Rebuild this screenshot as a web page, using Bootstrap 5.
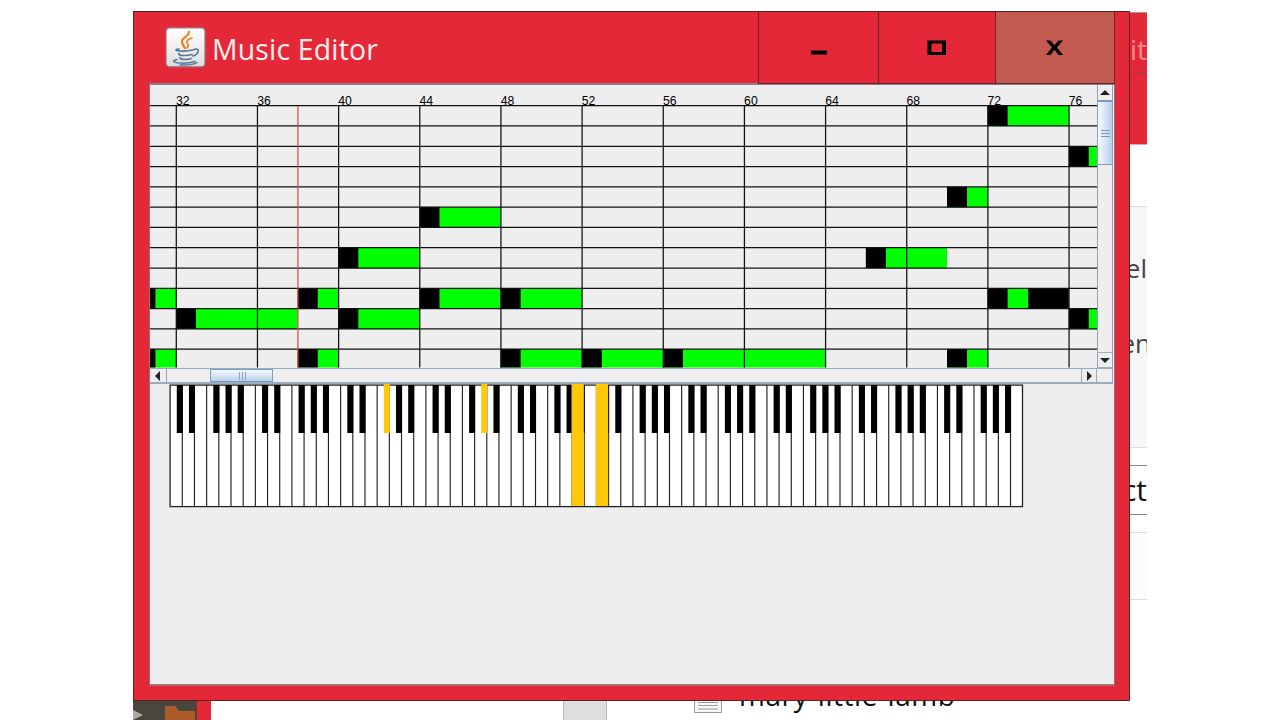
<!DOCTYPE html>
<html lang="en">
<head>
<meta charset="utf-8">
<title>Music Editor</title>
<link href="https://cdn.jsdelivr.net/npm/bootstrap@5.3.0/dist/css/bootstrap.min.css" rel="stylesheet">
<style>
body{background:#fff;font-family:"Open Sans","Noto Sans",sans-serif;height:720px}
svg{display:block;flex:none}
.desktop{width:1014px;height:709px;margin:11px 0 0 133px}
.edge{width:17px;right:0;top:0;height:690px}
.edge>div{display:flex;align-items:center;justify-content:flex-end;white-space:nowrap;overflow:hidden;flex:none;line-height:1}
.e-red{background:#e52837}
.e-title{height:62px;border-top:1px solid #a99;border-bottom:1px solid #94404a;color:#f78b91;font-size:28px;padding-top:12px;margin-top:1px}
.edge>.e-panel{background:#f5f7f9;border-top:1px solid #dcdcdf;border-bottom:1px solid #dcdcdf;color:#444;font-size:26px;justify-content:flex-start}
.taskstrip{top:690px;left:0;right:0;height:19px}
.dark{width:64px;background:#4a463e}
.redbar{width:14px;background:#e52837}
.graybar{width:44px;background:#dedede;border:solid #b5b5b5;border-width:0 1px;margin-left:352px}
.filename{font-size:28px;letter-spacing:.56px;line-height:30px;margin-top:-21px;margin-left:17px;color:#111;white-space:nowrap;height:40px}
.win{width:997px;height:690px;left:0;top:0;background:#e52837;border:1px solid #522329}
.titlebar{height:71px;padding-left:31px}
.title-text{font-size:28.4px;color:#fff0ee;line-height:34px;margin-left:6px;letter-spacing:.2px;padding-top:3px}
.wbtn{height:72px;border-left:1px solid #63262c;border-bottom:1px solid #63262c;flex:none}
.wclose{background:#c25a50;border-right:1px solid #74212a}
.client{margin-left:15px;width:966px;height:603px;background:#eee;border:solid #94707f;border-width:2px 1px;border-top-color:#8b7b8e;border-bottom:2px solid #a5707a}
.hbar{height:16px;border:solid #9aabbd;border-width:1px 0 2px;background:#eee}
.vbar{width:16px;border:solid #8ea1b8;border-width:0 1px}
.hthumb{width:63px;border:1px solid #7a9ac8;background:linear-gradient(#f3f8fd,#dbe8f6 45%,#b8cfe8)}
.vthumb{height:65px;border:1px solid #7a9ac8;border-width:2px 0 1px;background:linear-gradient(90deg,#f3f8fd,#dbe8f6 45%,#b8cfe8)}
.ticklabel{font:12.2px "Liberation Sans",sans-serif}
</style>
</head>
<body>
<main class="desktop position-relative overflow-hidden">
  <div class="edge position-absolute d-flex flex-column">
    <div class="e-red e-title">it</div>
    <div class="e-red" style="height:71px;border-bottom:1px solid #e9a5aa"></div>
    <div style="height:61px"></div>
    <div class="e-panel flex-column align-items-end" style="height:242px"><span style="margin-top:48px">el</span><span style="margin-top:49px;margin-right:-4px">en</span></div>
    <div style="height:17px"></div>
    <div style="height:50px;border:solid #888;border-width:1px 0;font-size:30px;color:#111"><span>ct</span></div>
    <div style="height:17px"></div>
    <div style="height:68px;background:#fcfcfc;border:solid #ddd;border-width:1px 0"></div>
  </div>
  <div class="taskstrip position-absolute d-flex overflow-hidden">
    <div class="dark"><svg width="64" height="19"><path d="M0 9 10 14 0 19Z" fill="#aaa"/><path d="M32 5h10l4 5h16v9H32Z" fill="#ae5b2b"/></svg></div>
    <div class="redbar"></div>
    <div class="graybar"></div>
    <svg width="28" height="19" style="margin-left:87px"><path d="M.5 0V11.500H27.500V0M4 1.500H24M4 4.500H24M4 8H24" fill="#f7f7f7" stroke="#999"/></svg>
    <div class="filename">mary-little-lamb</div>
  </div>

  <section class="win position-absolute">
    <header class="titlebar d-flex align-items-center">
      <svg width="41" height="41" viewBox="0 0 41 41">
        <defs><linearGradient id="ic" x2="0" y2="1"><stop stop-color="#fff"/><stop offset="1" stop-color="#ddd"/></linearGradient></defs>
        <rect x="1" y=".8" width="39" height="39" rx="3.500" fill="url(#ic)" stroke="#9c6f78" stroke-width="1.200"/>
        <g fill="none" stroke-linecap="round">
          <path d="M24 5C24.500 9 16 11 17 15Q17.500 18 20 21" stroke="#e58427" stroke-width="2.300"/>
          <path d="M27 11C21 13 21 15 23 17Q24 19 22 21" stroke="#e58427" stroke-width="1.700"/>
          <g stroke="#56799a" stroke-width="1.700">
            <path d="M14 22Q9.500 22.500 11.500 23.500Q19 25 28 23M29 22.500Q34 21 33 25Q32 28 28 29"/>
            <path d="M14 26.500Q13 28.500 19 28.500Q24 28.500 27 27.500M15 30.500Q15 32.500 20 32.500Q24 32.500 26 31.500"/>
            <path d="M12 32.500Q5 34.500 12 35.800Q22 37 30 34.500M15 38Q28 38.500 32 35.500" stroke-width="1.500"/>
          </g>
        </g>
      </svg>
      <div class="title-text">Music Editor</div>
      <div class="d-flex ms-auto align-self-start" style="margin-right:14px">
        <div class="wbtn" style="width:120px"><svg width="119" height="71"><path d="M52 38.500h16v4H52Z"/></svg></div>
        <div class="wbtn" style="width:117px"><svg width="116" height="71"><path fill-rule="evenodd" d="M48.500 28.500h18.500v14.500H48.500ZM52.500 31.500v8.500h10.500v-8.500Z"/></svg></div>
        <div class="wbtn wclose" style="width:120px"><svg width="118" height="71"><path d="M50 28.500h4.500l4 4.800 4-4.800h4.500l-6 7 6 7.500h-4.500l-4-5.200-4 5.200h-4.500l6-7.500Z"/></svg></div>
      </div>
    </header>
    <div class="client">
      <div class="d-flex">
        <svg id="roll" width="947" height="283" viewBox="150 85 947 283"></svg>
        <div class="vbar d-flex flex-column">
          <svg width="14" height="15"><path d="M7 5l5 5H2Z" fill="#222"/></svg>
          <div class="vthumb"><svg width="14" height="61"><path d="M3 28.500h9M3 31.500h9M3 34.500h9" stroke="#7994c0"/></svg></div>
          <svg class="mt-auto" width="14" height="16"><path d="M0 .5H14M0 15.500H14" stroke="#a3b0bf"/><path d="M7 11l5-5H2Z" fill="#222"/></svg>
        </div>
      </div>
      <div class="hbar d-flex" style="width:963px">
        <svg width="17" height="13"><path d="M5 7l5-5v10Z" fill="#222"/><path d="M16.500 0V14" stroke="#89a7cb"/></svg>
        <div class="hthumb" style="margin-left:43px"><svg width="61" height="11"><path d="M28.500 2v8M31.500 2v8M34.500 2v8" stroke="#8ba3c8"/></svg></div>
        <svg class="ms-auto" width="33" height="13"><path d="M1.500 0V14M16.500 0V14M32.500 0V14" stroke="#9aabbd"/><path d="M12 7l-5-5v10Z" fill="#222"/></svg>
      </div>
      <svg id="piano" width="860" height="124" viewBox="167 384 860 124" style="margin-left:17px"></svg>
    </div>
  </section>
</main>
<script>
const NS = 'http://www.w3.org/2000/svg';
function add(parent, tag, attrs, text) {
  const el = document.createElementNS(NS, tag);
  for (const k in attrs) el.setAttribute(k, attrs[k]);
  if (text) el.textContent = text;
  parent.appendChild(el);
}
// Piano roll
const roll = document.getElementById('roll');
const bx = b => 176 + (b - 32) * 20.29, ry = r => 106 + r * 20.29;
// row, first beat, end beat
const notes = [[0,72,76],[2,76,80],[4,70,72],[5,44,48],[7,40,44],[7,66,70],[9,30,32],[9,38,40],[9,44,48],[9,48,52],
  [9,72,74],[10,32,38],[10,40,44],[10,76,80],[12,30,32],[12,38,40],[12,48,52],[12,52,56],[12,56,64],[12,70,72]];
for (const [r, s, e] of notes) {
  add(roll, 'rect', {x: bx(s), y: ry(r), width: bx(e) - bx(s), height: r === 12 ? 18 : 20.29, fill: '#0f0'});
  add(roll, 'rect', {x: bx(s), y: ry(r) - .5, width: 20, height: r === 12 ? 18.5 : 20.5});
}
add(roll, 'rect', {x: bx(74), y: ry(9), width: 40.58, height: 20.29});
for (let r = 0; r < 13; r++) add(roll, 'path', {d: `M150 ${ry(r) - .3}H1098`, stroke: '#111', 'stroke-width': 1.25});
for (let b = 32; b <= 76; b += 4) {
  add(roll, 'path', {d: `M${bx(b) + .3} 106V367.500`, stroke: '#111', 'stroke-width': 1.25});
  add(roll, 'text', {x: bx(b), y: 105, class: 'ticklabel'}, String(b));
}
add(roll, 'path', {d: `M${bx(38) + .2} 106V367.500`, stroke: '#dd4444', 'stroke-width': 1.2});
// Keyboard
const piano = document.getElementById('piano');
const kx = i => 170.1 + i * 12.18;
add(piano, 'rect', {x: 170.1, y: 385.1, width: 852.4, height: 121.5, fill: '#fff', stroke: '#222', 'stroke-width': 1.3});
for (let i = 1; i < 70; i++) add(piano, 'path', {d: `M${kx(i)} 385V506.500`, stroke: '#222', 'stroke-width': 1.15});
for (let i = 0; i < 70; i++)
  if ([0, 1, 3, 4, 5].includes(i % 7)) {
    const lit = i === 17 || i === 25;
    add(piano, 'rect', {x: kx(i + 1) - 5.5, y: lit ? 384 : 385, width: 6, height: lit ? 49 : 48, fill: lit ? '#ffc808' : '#000'});
  }
for (const i of [33, 35]) add(piano, 'rect', {x: kx(i) - .5, y: 384, width: 12.3, height: 122, fill: '#ffc808'});
</script>
<script src="https://cdn.jsdelivr.net/npm/bootstrap@5.3.0/dist/js/bootstrap.bundle.min.js"></script>
</body>
</html>
